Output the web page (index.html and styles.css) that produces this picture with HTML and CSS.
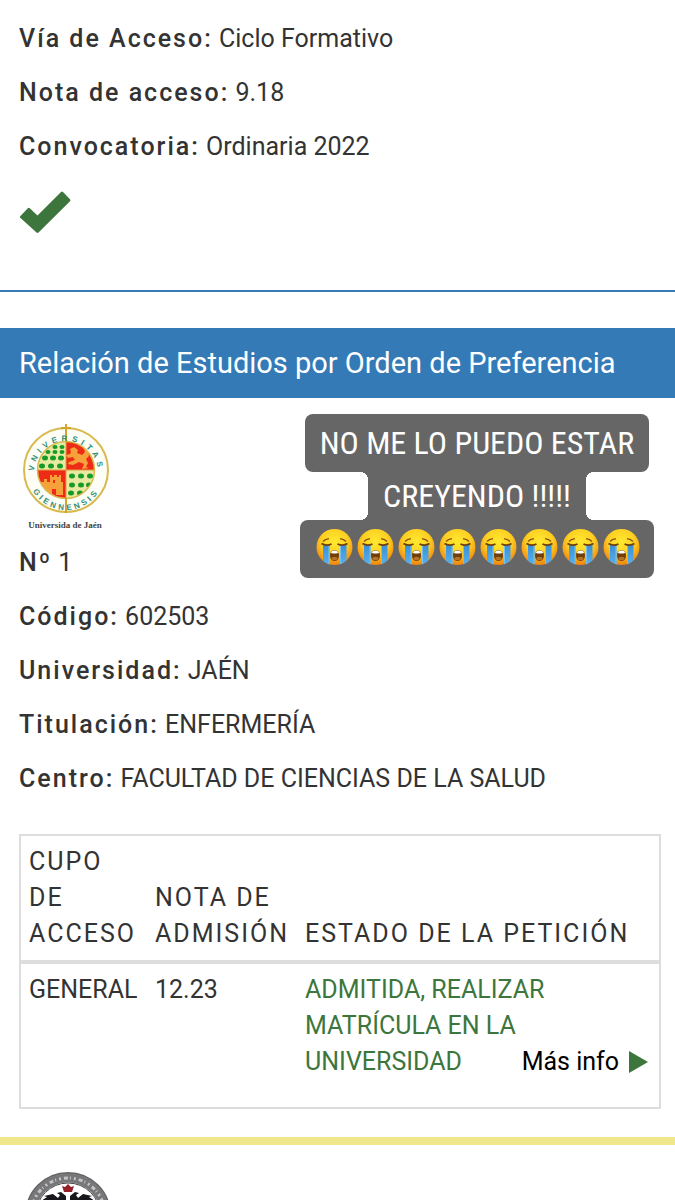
FILE: index.html
```html
<!DOCTYPE html>
<html lang="es">
<head>
    <meta charset="UTF-8">
    <meta name="viewport" content="width=device-width, initial-scale=1.0">
    <title>Relación de Estudios por Orden de Preferencia</title>
    <link rel="stylesheet" href="styles.css">
</head>
<body>
    <section class="summary">
        <p class="field"><strong>Vía de Acceso:</strong> Ciclo Formativo</p>
        <p class="field"><strong>Nota de acceso:</strong> 9.18</p>
        <p class="field"><strong>Convocatoria:</strong> Ordinaria 2022</p>
        <svg class="check" viewBox="0 0 52 44" role="img" aria-label="Correcto">
            <path d="M1 26.500 8.800 18.200Q9.800 17.500 10.800 18.200L18.500 25.500 42 2Q43 1.200 44 2L51 9.200Q51.800 10.200 51 11.200L19.500 42.500Q18.500 43.300 17.500 42.500L1 27.500Q.5 27 1 26.500Z" fill="#3c763d"/>
        </svg>
    </section>

    <h2 class="banner">Relación de Estudios por Orden de Preferencia</h2>

    <section class="study">
        <svg class="crest" viewBox="0 0 94 108" role="img" aria-label="Universidad de Jaén">
            <defs>
                <path id="arcTop" d="M15 49A32 32 0 1 1 79 49"/>
                <path id="arcBottom" d="M9 48A38 38 0 0 0 85 48"/>
                <clipPath id="shield"><circle cx="47" cy="46" r="28.500"/></clipPath>
            </defs>
            <circle cx="47" cy="46" r="42" fill="#fffef6" stroke="#d9ba50" stroke-width="2"/>
            <g clip-path="url(#shield)">
                <path d="M18 17h29v29H18zM47 46h29v29H47z" fill="#e8e9a0"/>
                <path d="M47 17h29v29H47zM18 46h29v29H18z" fill="#ee2b16"/>
                <g fill="#169a28">
                    <ellipse cx="36" cy="23" rx="2.500" ry="2"/><ellipse cx="43" cy="23" rx="2.500" ry="2"/>
                    <ellipse cx="29" cy="28" rx="2.500" ry="2"/><ellipse cx="36" cy="28" rx="2.500" ry="2"/><ellipse cx="43" cy="28" rx="2.500" ry="2"/>
                    <ellipse cx="26" cy="34" rx="3" ry="2.500"/><ellipse cx="34" cy="34" rx="3" ry="2.500"/><ellipse cx="42" cy="34" rx="3" ry="2.500"/>
                    <ellipse cx="23" cy="42" rx="3" ry="2.500"/><ellipse cx="32" cy="42" rx="3" ry="2.500"/><ellipse cx="41" cy="42" rx="3" ry="2.500"/>
                    <ellipse cx="53" cy="52" rx="3" ry="2.500"/><ellipse cx="62" cy="52" rx="3" ry="2.500"/><ellipse cx="71" cy="52" rx="3" ry="2.500"/>
                    <ellipse cx="53" cy="61" rx="3" ry="2.500"/><ellipse cx="62" cy="61" rx="3" ry="2.500"/><ellipse cx="70" cy="61" rx="3" ry="2.500"/>
                    <ellipse cx="52" cy="69" rx="3" ry="2.500"/><ellipse cx="61" cy="69" rx="3" ry="2.500"/>
                </g>
                <path d="M51 25l4-2 4 3-1 3 5 2 3-3-1-3 3-3 3 3-2 2 1 5-3 3 2 4-2 4 3 1-7 1 2-5-5-2-6 3-5-1 1-2 6-2-2-3-5 1-2-3 4-1 1-2z" fill="#f6a13a"/>
                <path d="M22 58h3v-3h3v3h3v-7h2v2h2v-2h3v2h2v-2h2v7h2v13H24v-9h-2z" fill="#f6a13a"/>
                <path d="M33 65h4v6h-4zM34 56h2v3h-2z" fill="#ee2b16"/>
            </g>
            <circle cx="47" cy="46" r="28.500" fill="none" stroke="#d9ba50" stroke-width="1.500"/>
            <path d="M47 0v18M42 4h10M47 74v15" stroke="#d3a52a" stroke-width="2" fill="none"/>
            <path d="M47 18v56M19 46h56" stroke="#e0a040" fill="none"/>
            <text class="crest-motto crest-motto-top"><textPath href="#arcTop" startOffset="50%">VNIVERSITAS</textPath></text>
            <text class="crest-motto"><textPath href="#arcBottom" startOffset="50%">GIENNENSIS</textPath></text>
            <text class="crest-name" x="46" y="104">Universida de Jaén</text>
        </svg>

        <div class="caption">
            <span class="caption-line">NO ME LO PUEDO ESTAR</span>
            <span class="caption-line caption-middle">CREYENDO !!!!!</span>
            <span class="caption-line caption-faces" role="img" aria-label="Caras llorando">
                <svg class="face" viewBox="0 0 37 38">
                    <defs>
                        <radialGradient id="skin" cx=".5" cy=".35" r=".65">
                            <stop offset="0" stop-color="#ffe92e"/>
                            <stop offset=".55" stop-color="#fdd023"/>
                            <stop offset="1" stop-color="#ee820f"/>
                        </radialGradient>
                        <linearGradient id="tear" x1="0" y1="0" x2="0" y2="1">
                            <stop offset="0" stop-color="#3a8fd6"/>
                            <stop offset="1" stop-color="#58b2ee"/>
                        </linearGradient>
                        <clipPath id="head"><circle cx="18.500" cy="19" r="18"/></clipPath>
                        <g id="crying">
                            <circle cx="18.500" cy="19" r="18" fill="url(#skin)"/>
                            <g clip-path="url(#head)">
                                <path d="M7 17h6.500v20H7zM24 17h6.500v20H24z" fill="url(#tear)"/>
                                <path d="M13 18v19M24.500 18v19" stroke="#79c2ef"/>
                            </g>
                            <path d="M5.500 15.500q4.500 3 10 .5M21.500 16q5.500 2.500 10-.5" fill="none" stroke="#714008" stroke-width="1.800"/>
                            <path d="M7 13.500q2-2.200 6-2.800M24 10.700q4 .6 6 2.800" fill="none" stroke="#8c5510" stroke-width="1.300"/>
                            <ellipse cx="18.500" cy="27.500" rx="4.500" ry="5.500" fill="#713d08"/>
                            <path d="M15 25q0-2.500 3.500-2.500T22 25q-3.500 1-7 0z" fill="#fff"/>
                            <ellipse cx="18.500" cy="30.500" rx="3" ry="1.800" fill="#b27428"/>
                        </g>
                    </defs>
                    <use href="#crying"/>
                </svg>
                <svg class="face" viewBox="0 0 37 38"><use href="#crying"/></svg>
                <svg class="face" viewBox="0 0 37 38"><use href="#crying"/></svg>
                <svg class="face" viewBox="0 0 37 38"><use href="#crying"/></svg>
                <svg class="face" viewBox="0 0 37 38"><use href="#crying"/></svg>
                <svg class="face" viewBox="0 0 37 38"><use href="#crying"/></svg>
                <svg class="face" viewBox="0 0 37 38"><use href="#crying"/></svg>
                <svg class="face" viewBox="0 0 37 38"><use href="#crying"/></svg>
            </span>
        </div>

        <p class="field"><strong>Nº</strong> 1</p>
        <p class="field"><strong>Código:</strong> 602503</p>
        <p class="field"><strong>Universidad:</strong> JAÉN</p>
        <p class="field"><strong>Titulación:</strong> ENFERMERÍA</p>
        <p class="field"><strong>Centro:</strong> FACULTAD DE CIENCIAS DE LA SALUD</p>

        <table class="requests">
            <thead>
                <tr>
                    <th class="col-quota">CUPO DE ACCESO</th>
                    <th class="col-mark">NOTA DE ADMISIÓN</th>
                    <th>ESTADO DE LA PETICIÓN</th>
                </tr>
            </thead>
            <tbody>
                <tr>
                    <td>GENERAL</td>
                    <td>12.23</td>
                    <td class="admitted">
                        ADMITIDA, REALIZAR MATRÍCULA EN LA UNIVERSIDAD
                        <a class="more" href="#info">Más info
                            <svg class="arrow" viewBox="0 0 20 22" aria-hidden="true"><path d="M0 0 19 11 0 22z" fill="#3c763d"/></svg>
                        </a>
                    </td>
                </tr>
            </tbody>
        </table>
    </section>

    <section class="next-study">
        <svg class="crest-next" viewBox="0 0 94 30" role="img" aria-label="Escudo de universidad">
            <circle cx="49" cy="44" r="42" fill="#fff" stroke="#666" stroke-width="2"/>
            <circle cx="49" cy="44" r="37" fill="none" stroke="#77777a" stroke-width="9"/>
            <circle cx="49" cy="44" r="37" fill="none" stroke="#c4c4c4" stroke-width="3" stroke-dasharray="2 3 4 2 1 3"/>
            <circle cx="49" cy="44" r="32" fill="#fff" stroke="#444"/>
            <path d="M43 15l3 1 3-3 3 3 3-1-2 6h-8z" fill="#96202a"/>
            <path d="M47 30V25l-5-4-4 1 3 2-2 3-5-4-9 2 3 1-6 4zM51 30V25l5-4 4 1-3 2 2 3 5-4 9 2-3 1 6 4z" fill="#17171c"/>
        </svg>
    </section>
</body>
</html>
```
FILE: styles.css
```css
* {
    margin: 0;
    padding: 0;
    box-sizing: border-box;
}

body {
    font-family: Roboto, sans-serif;
    font-size: 25px;
    line-height: 36px;
    color: #333;
    background: #fff;
}

svg {
    display: block;
}

.summary {
    padding: 21px 19px 56px;
    border-bottom: 2px solid #337ab7;
}

.field {
    margin-bottom: 18px;
}

.field strong,
.requests th {
    font-weight: 500;
    letter-spacing: 2px;
}

.check {
    width: 52px;
    height: 44px;
    margin-top: 25px;
}

.banner {
    margin-top: 36px;
    padding: 17px 19px;
    font-size: 29px;
    font-weight: 400;
    color: #fff;
    background: #337ab7;
}

.study {
    position: relative;
    padding: 26px 14px 28px 19px;
    border-bottom: 8px solid #f0e68c;
}

.crest {
    width: 94px;
    height: 108px;
    margin-bottom: 13px;
}

.crest-motto {
    font: bold 8px "Liberation Sans", sans-serif;
    letter-spacing: 3px;
    text-anchor: middle;
    fill: #2f8f78;
}

.crest-motto-top {
    letter-spacing: 4px;
}

.crest-name {
    font: bold 9px "Liberation Serif", serif;
    text-anchor: middle;
    fill: #444;
}

/* story caption lying over the page */
.caption {
    position: absolute;
    top: 16px;
    right: 21px;
    display: flex;
    flex-direction: column;
    align-items: center;
    font-family: "Roboto Condensed", "Liberation Sans Narrow", Roboto, sans-serif;
    font-size: 32px;
    color: #fff;
}

.caption-line {
    padding: 11px 15px;
    background: #666;
    border-radius: 8px;
    white-space: nowrap;
}

.caption-middle {
    position: relative;
    padding: 6px 15px;
    border-radius: 0;
}

.caption-middle::before,
.caption-middle::after {
    content: "";
    position: absolute;
    top: 0;
    width: 8px;
    height: 100%;
}

.caption-middle::before {
    right: 100%;
    background:
        radial-gradient(circle at 0 100%, transparent 8px, #666 8px) top / 8px 8px no-repeat,
        radial-gradient(circle at 0 0, transparent 8px, #666 8px) bottom / 8px 8px no-repeat;
}

.caption-middle::after {
    left: 100%;
    background:
        radial-gradient(circle at 100% 100%, transparent 8px, #666 8px) top / 8px 8px no-repeat,
        radial-gradient(circle at 100% 0, transparent 8px, #666 8px) bottom / 8px 8px no-repeat;
}

.caption-faces {
    display: flex;
    gap: 4px;
    padding: 8px 14px 12px 16px;
}

.face {
    width: 37px;
    height: 38px;
}

.requests {
    width: 100%;
    margin-top: 37px;
    border: 2px solid #ddd;
    border-collapse: collapse;
}

.requests th,
.requests td {
    padding: 8px;
    text-align: left;
    vertical-align: top;
}

.requests th {
    font-weight: 400;
    vertical-align: bottom;
    border-bottom: 4px solid #ddd;
}

.requests td {
    padding-bottom: 27px;
}

.col-quota {
    width: 127px;
}

.col-mark {
    width: 150px;
}

.requests .admitted {
    color: #3c763d;
}

.more {
    float: right;
    display: flex;
    align-items: center;
    gap: 10px;
    margin-right: 2px;
    color: #000;
    text-decoration: none;
}

.arrow {
    width: 20px;
    height: 22px;
}

.next-study {
    padding: 26px 19px 0;
}

.crest-next {
    width: 94px;
    height: 30px;
}
```
